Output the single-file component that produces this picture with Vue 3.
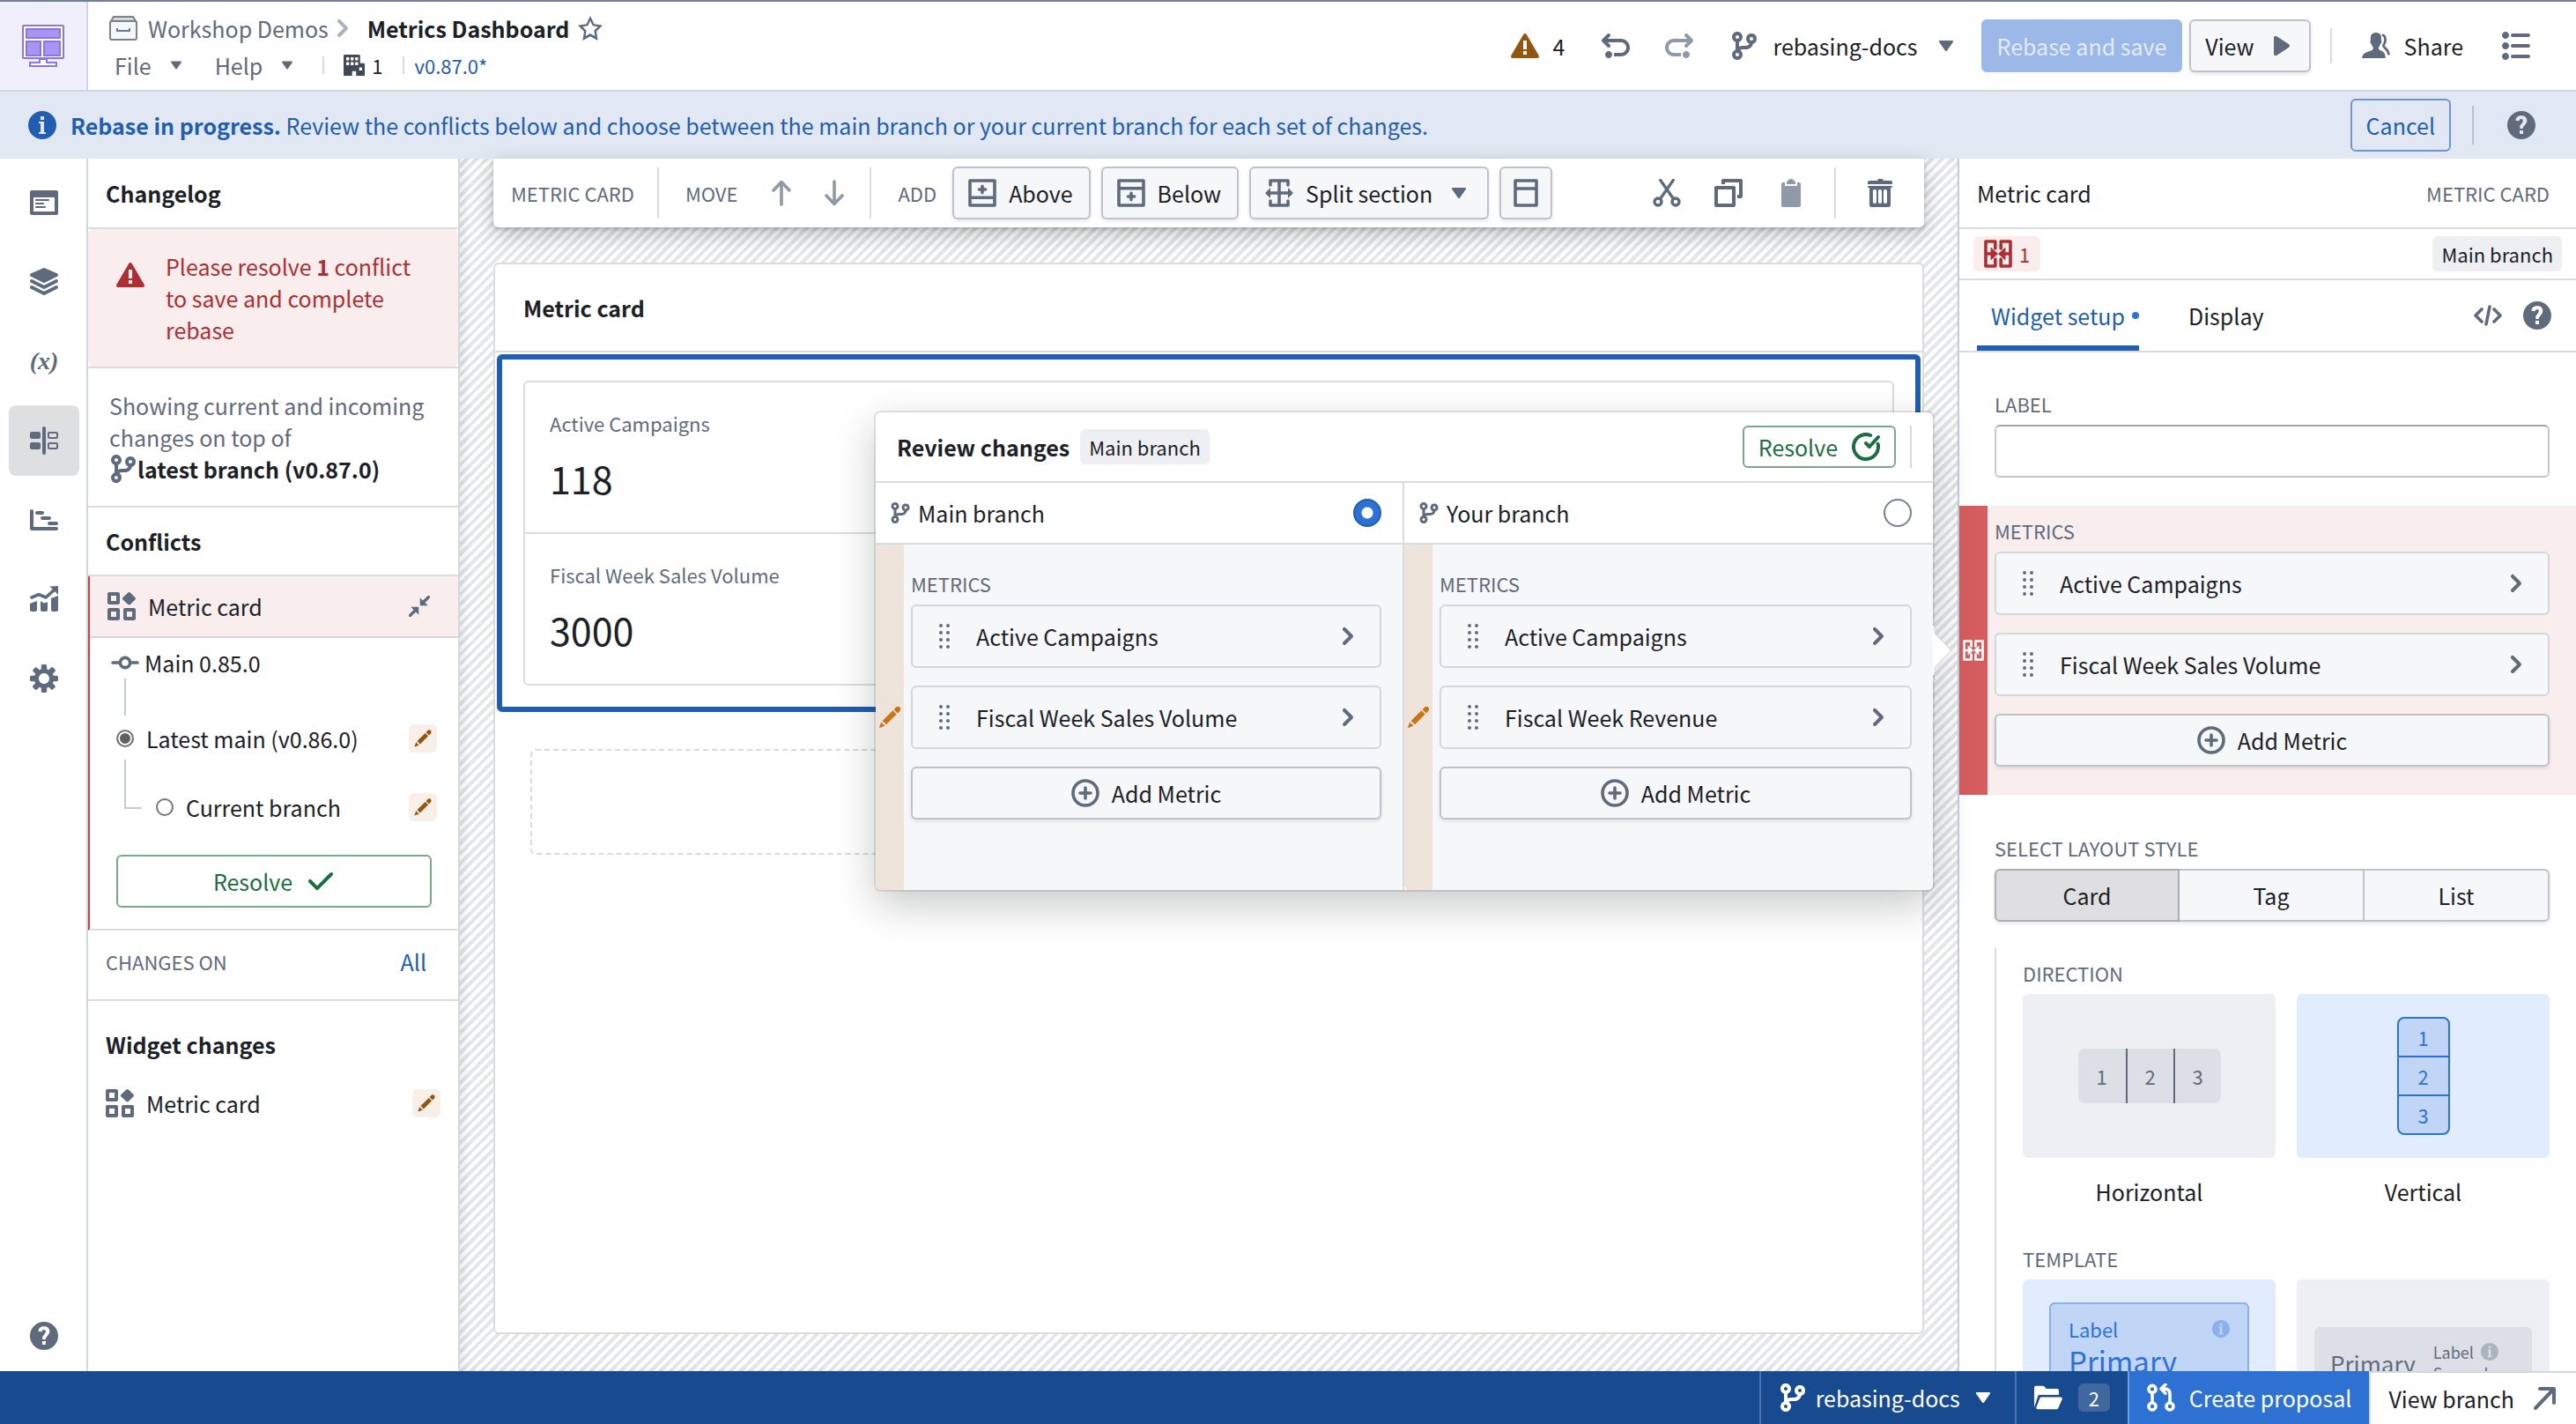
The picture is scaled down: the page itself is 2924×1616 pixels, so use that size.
<template>
  <div class="app">
    <header class="header">
      <a class="logo" href="#" aria-label="Workshop">
        <svg width="48" height="48" viewBox="0 0 48 48" fill="none">
          <rect x="1" y="1" width="46" height="37" rx="1" fill="#fff" stroke="#8b76dc" stroke-width="2" />
          <path d="M5 5h38v10H5zM5 19h16v16H5zM25 19h18v16H25z" fill="#a695f5" stroke="#8b76dc" stroke-width="2" />
          <path d="M20 39h8v4h11v4H9v-4h11z" fill="#fff" stroke="#8b76dc" stroke-width="2" />
        </svg>
      </a>

      <div class="header-info">
        <div class="crumbs">
          <svg width="32" height="28" viewBox="0 0 32 28" fill="none">
            <path d="M2 6 5 1h22l3 5z" fill="#d3d8de" stroke="#7d8187" stroke-width="2" />
            <rect x="1" y="6" width="30" height="21" rx="2" fill="#f6f7f9" stroke="#7d8187" stroke-width="2" />
            <path d="M9 14v3h14v-3" stroke="#5f7f99" stroke-width="2" />
          </svg>
          <a href="#" class="crumb">Workshop Demos</a>
          <Icon class="crumb-sep" name="chevronRight" :size="32" />
          <h1 class="crumb-current">Metrics Dashboard</h1>
          <button class="bare star" type="button" aria-label="Favorite"><Icon name="star" :size="28" /></button>
        </div>
        <div class="menus">
          <button class="bare menu" type="button">File <Icon name="caretDown" :size="24" /></button>
          <button class="bare menu" type="button">Help <Icon name="caretDown" :size="24" /></button>
          <div class="meta">
            <span class="vline short" />
            <span class="org"><Icon name="office" :size="24" />1</span>
            <span class="vline short" />
            <a class="version" href="#">v0.87.0*</a>
          </div>
        </div>
      </div>

      <div class="header-actions">
        <button class="bare warn" type="button"><Icon name="warning" :size="32" /><span>4</span></button>
        <button class="bare undo" type="button" aria-label="Undo"><Icon name="undo" :size="32" /></button>
        <button class="bare redo" type="button" aria-label="Redo"><Icon name="undo" :size="32" /></button>
        <button class="bare branch-menu" type="button">
          <Icon name="branch" :size="32" />rebasing-docs<Icon name="caretDown" :size="32" />
        </button>
        <button class="btn save" type="button" disabled>Rebase and save</button>
        <button class="btn view" type="button">View<Icon name="play" :size="32" /></button>
        <span class="vline header-line" />
        <button class="bare share" type="button"><Icon name="people" :size="32" />Share</button>
        <button class="bare list" type="button" aria-label="Properties"><Icon name="properties" :size="32" /></button>
      </div>
    </header>

    <div class="banner">
      <Icon name="info" :size="32" />
      <p>
        <strong>Rebase in progress.</strong> Review the conflicts below and choose between the main branch or your
        current branch for each set of changes.
      </p>
      <button class="btn-outline cancel" type="button">Cancel</button>
      <span class="vline banner-line" />
      <button class="bare" type="button" aria-label="Help"><Icon name="help" :size="32" /></button>
    </div>

    <div class="workspace">
      <nav class="rail">
        <button
          v-for="item in railItems"
          :key="item"
          class="rail-btn"
          :class="{ active: activeRail === item }"
          type="button"
          :aria-label="item"
          @click="activeRail = item"
        >
          <span v-if="item === 'variable'" class="variable">(x)</span>
          <Icon v-else :name="item" :size="32" />
        </button>
        <button class="rail-btn rail-help" type="button" aria-label="Help"><Icon name="help" :size="32" /></button>
      </nav>

      <aside class="changelog">
        <h2 class="panel-title">Changelog</h2>
        <div class="alert">
          <Icon name="warning" :size="32" />
          <p>Please resolve <strong>1</strong> conflict to save and complete rebase</p>
        </div>
        <p class="showing">
          Showing current and incoming changes on top of
          <span class="latest"><Icon name="branch" :size="32" /><strong>latest branch (v0.87.0)</strong></span>
        </p>
        <h2 class="panel-title conflicts-title">Conflicts</h2>
        <section class="conflict">
          <div class="conflict-head">
            <Icon name="widget" :size="32" />
            <span>Metric card</span>
            <button class="bare" type="button" aria-label="Collapse"><Icon name="minimize" :size="24" /></button>
          </div>
          <div class="tree">
            <div class="node root"><Icon name="commit" :size="32" />Main 0.85.0</div>
            <span class="stem" />
            <div class="node latest-node">
              <input id="tree-main" v-model="treeChoice" type="radio" name="tree" value="main" />
              <label for="tree-main">Latest main (v0.86.0)</label>
              <button class="pencil" type="button" aria-label="Edited"><Icon name="edit" :size="22" /></button>
            </div>
            <div class="node current-node">
              <span class="elbow" />
              <input id="tree-current" v-model="treeChoice" type="radio" name="tree" value="current" />
              <label for="tree-current">Current branch</label>
              <button class="pencil" type="button" aria-label="Edited"><Icon name="edit" :size="22" /></button>
            </div>
          </div>
          <button class="btn-outline resolve-wide" type="button">Resolve<Icon name="tick" :size="32" /></button>
        </section>
        <div class="changes-on">
          <span class="caps">Changes on</span>
          <a href="#">All</a>
        </div>
        <h2 class="panel-title widget-title">Widget changes</h2>
        <div class="widget-row">
          <Icon name="widget" :size="32" />
          <span>Metric card</span>
          <button class="pencil" type="button" aria-label="Edited"><Icon name="edit" :size="22" /></button>
        </div>
      </aside>

      <main class="canvas">
        <div class="toolbar">
          <span class="caps tool-name">Metric card</span>
          <span class="vline" />
          <span class="caps tool-move">Move</span>
          <button class="bare faded" type="button" aria-label="Move up"><Icon name="arrowUp" :size="32" /></button>
          <button class="bare faded down" type="button" aria-label="Move down"><Icon name="arrowUp" :size="32" /></button>
          <span class="vline tool-line" />
          <span class="caps tool-add">Add</span>
          <div class="tool-buttons">
            <button class="btn" type="button"><Icon name="rowAbove" :size="32" />Above</button>
            <button class="btn" type="button"><Icon name="rowBelow" :size="32" />Below</button>
            <button class="btn split" type="button">
              <Icon name="split" :size="32" />Split section<Icon name="caretDown" :size="32" />
            </button>
            <button class="btn" type="button" aria-label="Header"><Icon name="layout" :size="32" /></button>
          </div>
          <div class="tool-edit">
            <button class="bare" type="button" aria-label="Cut"><Icon name="cut" :size="32" /></button>
            <button class="bare" type="button" aria-label="Copy"><Icon name="duplicate" :size="32" /></button>
            <button class="bare faded" type="button" aria-label="Paste"><Icon name="clipboard" :size="32" /></button>
            <span class="vline" />
            <button class="bare" type="button" aria-label="Delete"><Icon name="trash" :size="32" /></button>
          </div>
        </div>

        <section class="page-card">
          <h2 class="page-title">Metric card</h2>
          <div class="selection">
            <div class="metric-list">
              <div v-for="metric in metricValues" :key="metric.label" class="metric">
                <span class="metric-label">{{ metric.label }}</span>
                <span class="metric-value">{{ metric.value }}</span>
              </div>
            </div>
          </div>
          <div class="dropzone" />
        </section>

        <div class="popover">
          <svg class="popover-arrow" width="22" height="56" viewBox="0 0 22 56">
            <path d="M0 0c0 6 2 9 6 13l13 13q2 2 0 4L6 43c-4 4-6 7-6 13z" fill="#fff" stroke="#d0d3d8" />
            <path d="M0 0v56" stroke="#fff" stroke-width="3" />
          </svg>
          <div class="popover-head">
            <h2>Review changes</h2>
            <span class="tag">Main branch</span>
            <button class="btn-outline resolve" type="button">Resolve<Icon name="confirm" :size="32" /></button>
            <span class="vline" />
          </div>
          <div class="compare">
            <div v-for="side in sides" :key="side.id" class="side">
              <div class="side-head">
                <Icon name="branch" :size="24" />
                <label :for="`side-${side.id}`">{{ side.name }}</label>
                <input :id="`side-${side.id}`" v-model="chosenSide" type="radio" name="side" :value="side.id" />
              </div>
              <div class="side-body">
                <div class="strip"><Icon name="edit" :size="28" /></div>
                <div class="side-metrics">
                  <span class="caps">Metrics</span>
                  <button v-for="metric in side.metrics" :key="metric" class="metric-item" type="button">
                    <Icon name="drag" :size="32" /><span>{{ metric }}</span><Icon name="chevronRight" :size="32" />
                  </button>
                  <button class="btn add-metric" type="button"><Icon name="addCircle" :size="32" />Add Metric</button>
                </div>
              </div>
            </div>
          </div>
        </div>
      </main>

      <aside class="inspector">
        <div class="inspector-head">
          <h2>Metric card</h2>
          <span class="caps">Metric card</span>
        </div>
        <div class="inspector-sub">
          <span class="conflict-tag"><Icon name="merge" :size="32" />1</span>
          <span class="tag">Main branch</span>
        </div>
        <div class="tabs">
          <button class="tab selected" type="button">Widget setup<span class="tab-dot" /></button>
          <button class="tab" type="button">Display</button>
          <button class="bare tab-code" type="button" aria-label="Code"><Icon name="code" :size="32" /></button>
          <button class="bare" type="button" aria-label="Help"><Icon name="help" :size="32" /></button>
        </div>

        <div class="field">
          <label class="caps" for="widget-label">Label</label>
          <input id="widget-label" v-model="widgetLabel" class="text-input" type="text" />
        </div>

        <div class="metrics-conflict">
          <div class="strip"><Icon name="merge" :size="24" /></div>
          <div class="side-metrics">
            <span class="caps">Metrics</span>
            <button v-for="metric in sides[0].metrics" :key="metric" class="metric-item" type="button">
              <Icon name="drag" :size="32" /><span>{{ metric }}</span><Icon name="chevronRight" :size="32" />
            </button>
            <button class="btn add-metric" type="button"><Icon name="addCircle" :size="32" />Add Metric</button>
          </div>
        </div>

        <div class="layout-style">
          <span class="caps">Select layout style</span>
          <div class="segmented">
            <button
              v-for="style in layoutStyles"
              :key="style"
              type="button"
              :class="{ on: layoutStyle === style }"
              @click="layoutStyle = style"
            >
              {{ style }}
            </button>
          </div>
        </div>

        <div class="options">
          <span class="caps">Direction</span>
          <div class="option-grid">
            <button class="option" type="button">
              <span class="thumb"><span class="cells across"><i>1</i><i>2</i><i>3</i></span></span>
              Horizontal
            </button>
            <button class="option" type="button">
              <span class="thumb on"><span class="cells stacked"><i>1</i><i>2</i><i>3</i></span></span>
              Vertical
            </button>
          </div>
          <span class="caps template-label">Template</span>
          <div class="option-grid">
            <button class="option" type="button">
              <span class="thumb on tall">
                <span class="sample-a">
                  <span class="sample-row">Label<Icon name="info" :size="20" /></span>
                  <span class="sample-big">Primary</span>
                </span>
              </span>
            </button>
            <button class="option" type="button">
              <span class="thumb tall">
                <span class="sample-b">
                  <span class="sample-mid">Primary</span>
                  <span class="sample-side">
                    <span class="sample-row">Label<Icon name="info" :size="20" /></span>
                    <span>Secondary</span>
                  </span>
                </span>
              </span>
            </button>
          </div>
        </div>
      </aside>
    </div>

    <footer class="footer">
      <button class="foot foot-branch" type="button">
        <Icon name="branch" :size="32" />rebasing-docs<Icon name="caretDown" :size="32" />
      </button>
      <button class="foot foot-folder" type="button"><Icon name="folder" :size="32" /><span class="count">2</span></button>
      <button class="foot foot-create" type="button"><Icon name="pull" :size="32" />Create proposal</button>
      <a class="foot foot-view" href="#">View branch<Icon name="arrowTopRight" :size="32" /></a>
    </footer>
  </div>
</template>

<script setup>
import { h, ref } from 'vue'

defineOptions({
  name: 'MetricsDashboardEditor',
})

// Each icon is [filled path, stroked path, stroke width] on a 16 unit grid.
const icons = {
  branch: [
    'M12 1c-1.66 0-3 1.34-3 3 0 1.25.76 2.32 1.85 2.77A2.02 2.02 0 019 8H7c-.73 0-1.41.21-2 .55V5.82C6.16 5.4 7 4.3 7 3c0-1.66-1.34-3-3-3S1 1.34 1 3c0 1.3.84 2.4 2 2.82v4.37c-1.16.4-2 1.51-2 2.81 0 1.66 1.34 3 3 3s3-1.34 3-3c0-1.04-.53-1.95-1.32-2.49.35-.31.81-.51 1.32-.51h2c1.92 0 3.52-1.35 3.91-3.15A2.996 2.996 0 0012 1zM4 2c.55 0 1 .45 1 1s-.45 1-1 1-1-.45-1-1 .45-1 1-1zm0 12c-.55 0-1-.45-1-1s.45-1 1-1 1 .45 1 1-.45 1-1 1zm8-9c-.55 0-1-.45-1-1s.45-1 1-1 1 .45 1 1-.45 1-1 1z',
  ],
  undo: [
    'M4 11c-1.1 0-2 .9-2 2s.9 2 2 2 2-.9 2-2-.9-2-2-2zm7-7H3.41L4.7 2.71c.19-.18.3-.43.3-.71a1.003 1.003 0 00-1.71-.71l-3 3C.11 4.47 0 4.72 0 5c0 .28.11.53.29.71l3 3c.18.18.43.29.71.29a1.003 1.003 0 00.71-1.71L3.41 6H11c1.66 0 3 1.34 3 3s-1.34 3-3 3H7v2h4c2.76 0 5-2.24 5-5s-2.24-5-5-5z',
  ],
  warning: [
    'M15.84 13.5l.01-.01-7-12-.01.01c-.17-.3-.48-.5-.85-.5s-.67.2-.85.5l-.01-.01-7 12 .01.01c-.09.15-.15.31-.15.5 0 .55.45 1 1 1h14c.55 0 1-.45 1-1 0-.19-.06-.35-.15-.5zm-6.85-.51h-2v-2h2v2zm0-3h-2v-5h2v5z',
  ],
  info: [
    'M8 0C3.58 0 0 3.58 0 8s3.58 8 8 8 8-3.58 8-8-3.58-8-8-8zM7 3h2v2H7V3zm3 10H6v-1h1V7H6V6h3v6h1v1z',
  ],
  help: [
    'M8 0C3.58 0 0 3.58 0 8s3.58 8 8 8 8-3.58 8-8-3.58-8-8-8zm1 13H7v-2h2v2zm1.93-6.52c-.14.32-.35.64-.62.97L9.25 8.83c-.12.15-.24.29-.28.42-.04.13-.09.3-.09.52V10H7.12V8.88s.05-.51.21-.71L8.4 6.73c.22-.26.35-.49.44-.68.09-.19.12-.38.12-.58 0-.3-.1-.55-.28-.75-.18-.19-.44-.28-.76-.28-.33 0-.59.1-.78.29-.19.19-.33.46-.4.81-.03.11-.1.15-.2.14l-1.7-.25c-.12-.01-.16-.08-.14-.19.12-.82.46-1.47 1.03-1.94.57-.48 1.32-.72 2.25-.72.47 0 .9.07 1.29.22s.72.34 1 .59c.28.25.49.55.65.89.15.35.22.72.22 1.12s-.07.75-.21 1.08z',
  ],
  caretDown: [
    'M12 5.5c0-.28-.22-.5-.5-.5h-7a.495.495 0 00-.42.83l3.5 5c.09.1.27.17.42.17s.33-.07.42-.17l3.5-5c.05-.09.08-.2.08-.33z',
  ],
  play: [
    'M13 8c0-.35-.19-.64-.46-.82l.01-.02-7-4.6-.01.02A.969.969 0 005 2.4c-.55 0-1 .45-1 1v9.2c0 .55.45 1 1 1 .21 0 .39-.08.54-.18l.01.02 7-4.6-.01-.02c.27-.18.46-.47.46-.82z',
  ],
  chevronRight: [
    'M10.71 7.29l-4-4a1.003 1.003 0 00-1.42 1.42L8.59 8 5.3 11.29c-.19.18-.3.43-.3.71a1.003 1.003 0 001.71.71l4-4c.18-.18.29-.43.29-.71 0-.28-.11-.53-.29-.71z',
  ],
  star: [
    'M16 6.11l-5.53-.84L8 0 5.53 5.27 0 6.11l4 4.1L3.06 16 8 13.27 12.94 16 12 10.21l4-4.1zM4.91 13.2l.59-3.62L3 7.02l3.45-.53L8 3.2l1.55 3.29 3.45.53-2.5 2.56.59 3.62L8 11.49 4.91 13.2z',
  ],
  office: [
    'M1 0h10.5c.55 0 1 .45 1 1v5.5H15c.55 0 1 .45 1 1V16H9.5v-3.5h-3V16H0V1c0-.55.45-1 1-1zM2 2v2.4h2.2V2zM5.4 2v2.4h2.2V2zM8.8 2v2.4H11V2zM2 5.6V8h2.2V5.6zM5.4 5.6V8h2.2V5.6zM8.8 5.6V8H11V5.6zM11.8 9.6V12H14V9.6z',
  ],
  people: [
    'M11.1 10.9c-.9-.35-1.6-.8-1.7-1.9.4-.4.9-1.1 1.1-2.1.5-.2.7-.7.7-1.3 0-.4-.1-.7-.3-.9.3-1.5.2-4.2-2.9-4.2C4.9.5 4.7 3.2 5 4.7c-.2.2-.3.5-.3.9 0 .6.2 1.1.7 1.3.2 1 .6 1.7 1.1 2.1 0 1.1-.8 1.6-1.7 1.9-2 .8-4.4 1-4.8 4.1h13.4c-.1-2.6-.9-3.5-2.3-4.1z',
    'M12 2c1.5.7 1.4 2.4 1.1 3.8-.2.9-.7 1.5-.9 2.2.3 1.3 2.6 1.7 3 4.6',
    1.4,
  ],
  properties: [
    'M2 6C.9 6 0 6.9 0 8s.9 2 2 2 2-.9 2-2-.9-2-2-2zm4-3h9c.55 0 1-.45 1-1s-.45-1-1-1H6c-.55 0-1 .45-1 1s.45 1 1 1zm-4 9c-1.1 0-2 .9-2 2s.9 2 2 2 2-.9 2-2-.9-2-2-2zm13 1H6c-.55 0-1 .45-1 1s.45 1 1 1h9c.55 0 1-.45 1-1s-.45-1-1-1zm0-6H6c-.55 0-1 .45-1 1s.45 1 1 1h9c.55 0 1-.45 1-1s-.45-1-1-1zM2 0C.9 0 0 .9 0 2s.9 2 2 2 2-.9 2-2-.9-2-2-2z',
  ],
  application: [
    'M3.5 7h7c.28 0 .5-.22.5-.5s-.22-.5-.5-.5h-7c-.28 0-.5.22-.5.5s.22.5.5.5zM15 1H1c-.55 0-1 .45-1 1v12c0 .55.45 1 1 1h14c.55 0 1-.45 1-1V2c0-.55-.45-1-1-1zm-1 12H2V5h12v8zM3.5 9h4c.28 0 .5-.22.5-.5S7.78 8 7.5 8h-4c-.28 0-.5.22-.5.5s.22.5.5.5zm0 2h5c.28 0 .5-.22.5-.5s-.22-.5-.5-.5h-5c-.28 0-.5.22-.5.5s.22.5.5.5z',
  ],
  layers: [
    'M.55 4.89l7 3.5c.14.07.29.11.45.11s.31-.04.45-.11l7-3.5a.998.998 0 00-.06-1.81L8.4.08a1.006 1.006 0 00-.79 0l-6.99 3a.992.992 0 00-.07 1.81zM15 10c-.16 0-.31.04-.45.11L8 13.38 1.45 10.1c-.14-.06-.29-.1-.45-.1-.55 0-1 .45-1 1 0 .39.23.73.55.89l7 3.5c.14.07.29.11.45.11s.31-.04.45-.11l7-3.5c.32-.16.55-.5.55-.89 0-.55-.45-1-1-1zm0-3.5c-.16 0-.31.04-.45.11L8 9.88 1.45 6.61A.997.997 0 001 6.5c-.55 0-1 .45-1 1 0 .39.23.73.55.89l7 3.5c.14.07.29.11.45.11s.31-.04.45-.11l7-3.5c.32-.16.55-.5.55-.89 0-.55-.45-1-1-1z',
  ],
  comparison: [
    'M1 3h4c.55 0 1 .45 1 1v2c0 .55-.45 1-1 1H1c-.55 0-1-.45-1-1V4c0-.55.45-1 1-1zm0 6h4c.55 0 1 .45 1 1v2c0 .55-.45 1-1 1H1c-.55 0-1-.45-1-1v-2c0-.55.45-1 1-1zM8 0c.55 0 1 .45 1 1v14c0 .55-.45 1-1 1s-1-.45-1-1V1c0-.55.45-1 1-1zm3 3h4c.55 0 1 .45 1 1v2c0 .55-.45 1-1 1h-4c-.55 0-1-.45-1-1V4c0-.55.45-1 1-1zm0 1v2h4V4zm0 5h4c.55 0 1 .45 1 1v2c0 .55-.45 1-1 1h-4c-.55 0-1-.45-1-1v-2c0-.55.45-1 1-1zm0 1v2h4v-2z',
  ],
  gantt: ['', 'M1 3v10h14M4 4h3M7 7h4M11 10h4', 2],
  chart: [
    'M0 10.5L4 9v5c0 .55-.45 1-1 1H1c-.55 0-1-.45-1-1zM6 9l2 1.2 2-.6V14c0 .55-.45 1-1 1H7c-.55 0-1-.45-1-1zm6-1.500L16 6v8c0 .55-.45 1-1 1h-2c-.55 0-1-.45-1-1zM16 .5v5L11.2.8z',
    'M1 7l4-1.7L9 7l5-4.5',
    1.8,
  ],
  settings: [
    'M15.19 6.39h-1.85c-.11-.37-.27-.71-.45-1.04l1.36-1.36c.31-.31.31-.82 0-1.13l-1.13-1.13a.803.803 0 00-1.13 0l-1.36 1.36c-.33-.17-.67-.33-1.04-.44V.79c0-.44-.36-.8-.8-.8h-1.6c-.44 0-.8.36-.8.8v1.86c-.39.12-.75.28-1.1.47l-1.3-1.3c-.3-.3-.79-.3-1.09 0L1.82 2.91c-.3.3-.3.79 0 1.09l1.3 1.3c-.2.34-.36.7-.48 1.09H.79c-.44 0-.8.36-.8.8v1.6c0 .44.36.8.8.8h1.85c.11.37.27.71.45 1.04l-1.36 1.36c-.31.31-.31.82 0 1.13l1.13 1.13c.31.31.82.31 1.13 0l1.36-1.36c.33.18.67.33 1.04.44v1.86c0 .44.36.8.8.8h1.6c.44 0 .8-.36.8-.8v-1.86c.39-.12.75-.28 1.1-.47l1.3 1.3c.3.3.79.3 1.09 0l1.09-1.09c.3-.3.3-.79 0-1.09l-1.3-1.3c.19-.35.36-.71.48-1.1h1.85c.44 0 .8-.36.8-.8v-1.6a.816.816 0 00-.81-.79zm-7.2 4.6c-1.66 0-3-1.34-3-3s1.34-3 3-3 3 1.34 3 3-1.34 3-3 3z',
  ],
  widget: [
    'M1 0h5c.55 0 1 .45 1 1v5c0 .55-.45 1-1 1H1c-.55 0-1-.45-1-1V1c0-.55.45-1 1-1zm1 2v3h3V2zM1 9h5c.55 0 1 .45 1 1v5c0 .55-.45 1-1 1H1c-.55 0-1-.45-1-1v-5c0-.55.45-1 1-1zm1 2v3h3v-3zm8-2h5c.55 0 1 .45 1 1v5c0 .55-.45 1-1 1h-5c-.55 0-1-.45-1-1v-5c0-.55.45-1 1-1zm1 2v3h3v-3zM8.6 3.1L11.7.2q.6-.4 1.2 0l2.9 2.9q.4.5 0 1L12.9 7q-.6.4-1.2 0L8.6 4.1q-.4-.5 0-1z',
  ],
  minimize: ['M1.5 8.5h6v6zM8.5 1.500v6h6z', 'M1 15l4-4M15 1l-4 4', 2.2],
  commit: ['', 'M1 8h3.5M11.5 8H15M8 5.2a2.8 2.8 0 100 5.600 2.8 2.8 0 000-5.600z', 1.8],
  edit: [
    'M3.25 10.26l2.47 2.47 6.69-6.69-2.46-2.48-6.7 6.7zM.99 14.99l3.86-1.39-2.46-2.44L.99 14.99zm12.25-14c-.48 0-.92.2-1.24.51l-1.44 1.44 2.47 2.47 1.44-1.44c.32-.32.51-.75.51-1.24.01-.95-.77-1.74-1.74-1.74z',
  ],
  tick: [
    'M14 3c-.28 0-.53.11-.71.29L6 10.59l-3.29-3.3a1.003 1.003 0 00-1.42 1.42l4 4c.18.18.43.29.71.29s.53-.11.71-.29l8-8A1.003 1.003 0 0014 3z',
  ],
  confirm: ['', 'M8 6l2 2 5-5.5M10.6 1.5A7 7 0 1014.8 6.4', 2],
  drag: [
    'M6 1a1 1 0 100 2 1 1 0 000-2zm4 0a1 1 0 100 2 1 1 0 000-2zM6 5a1 1 0 100 2 1 1 0 000-2zm4 0a1 1 0 100 2 1 1 0 000-2zM6 9a1 1 0 100 2 1 1 0 000-2zm4 0a1 1 0 100 2 1 1 0 000-2zm-4 4a1 1 0 100 2 1 1 0 000-2zm4 0a1 1 0 100 2 1 1 0 000-2z',
  ],
  addCircle: ['', 'M8 1a7 7 0 100 14A7 7 0 008 1zM5 8h6M8 5v6', 1.8],
  rowAbove: ['', 'M1 1h14v14H1zM1 10.6h14M8 4.2v3.6M6.2 6h3.6', 1.8],
  rowBelow: ['', 'M1 1h14v14H1zM1 5.4h14M8 8.200v3.600M6.2 10h3.6', 1.8],
  split: ['M0 8l3-3v6zM16 8l-3-3v6z', 'M3 3.500V1h10v2.500M3 12.500V15h10v-2.500M8 1v14M2 8h12', 1.8],
  layout: ['', 'M2 1h12v14H2zM2 5.500h12', 1.8],
  arrowUp: ['', 'M8 14.5V2M3.5 6.5L8 1.8l4.500 4.7', 1.8],
  cut: ['', 'M4.200 11.400L11.600.8M11.800 11.400L4.400.8M3 11a2 2 0 100 4 2 2 0 000-4zM13 11a2 2 0 100 4 2 2 0 000-4z', 1.7],
  duplicate: [
    'M15 0H5c-.55 0-1 .45-1 1v2h2V2h8v7h-1v2h2c.55 0 1-.45 1-1V1c0-.55-.45-1-1-1zm-4 4H1c-.55 0-1 .45-1 1v10c0 .55.45 1 1 1h10c.55 0 1-.45 1-1V5c0-.55-.45-1-1-1zm-1 10H2V6h8v8z',
  ],
  clipboard: [
    'M11 2c0-.55-.45-1-1-1h.22C9.88.4 9.24 0 8.5 0S7.12.4 6.78 1H7c-.55 0-1 .45-1 1v1h5V2zm2 0h-1v2H5V2H4c-.55 0-1 .45-1 1v12c0 .55.45 1 1 1h9c.55 0 1-.45 1-1V3c0-.55-.45-1-1-1z',
  ],
  trash: [
    'M14.49 3.99h-13c-.28 0-.5.22-.5.5s.22.5.5.5h.5v10c0 .55.45 1 1 1h10c.55 0 1-.45 1-1v-10h.5c.28 0 .5-.22.5-.5s-.22-.5-.5-.5zm-8.5 9c0 .55-.45 1-1 1s-1-.45-1-1v-6c0-.55.45-1 1-1s1 .45 1 1v6zm3 0c0 .55-.45 1-1 1s-1-.45-1-1v-6c0-.55.45-1 1-1s1 .45 1 1v6zm3 0c0 .55-.45 1-1 1s-1-.45-1-1v-6c0-.55.45-1 1-1s1 .45 1 1v6zm2-12h-4c0-.55-.45-1-1-1h-2c0 .55-.45 1-1 1h-4c-.55 0-1 .45-1 1v1h14v-1c0-.55-.45-1-1-1z',
  ],
  merge: [
    'M3.8 4.2L8 8l-4.2 3.8zM12.2 4.2L8 8l4.2 3.8z',
    'M6.4 5V1H1v14h5.4v-4M9.6 5V1H15v14H9.6v-4M1 8h5M15 8h-5',
    1.8,
  ],
  code: ['', 'M4.5 4.500L1 8l3.500 3.500M11.500 4.500L15 8l-3.500 3.500M9 3L7 13', 1.8],
  folder: [
    'M2.1 7.2c.15-.4.5-.7.9-.7h11V4c0-.55-.45-1-1-1H7L5.7 1.7c-.2-.2-.4-.3-.7-.3H1c-.55 0-1 .45-1 1v11.2zM15 7.800H4.1c-.4 0-.75.25-.9.6l-2 5.100c-.2.5.2 1.100.8 1.100h10.700c.4 0 .8-.25.95-.65l2.200-5c.2-.5-.2-1.150-.85-1.150z',
  ],
  pull: [
    '',
    'M3 1.2a2 2 0 100 4 2 2 0 000-4zM3 11a2 2 0 100 4 2 2 0 000-4zM13 11a2 2 0 100 4 2 2 0 000-4zM3 5.200V11M13 11V6c0-2-1-3-3-3H8M10.500.6L8 3l2.500 2.600',
    1.8,
  ],
  arrowTopRight: ['', 'M3 13.5L13 3M5.5 2.5h8v8', 2],
}

const Icon = ({ name, size }) => {
  const [fill, stroke, width] = icons[name]
  return h('svg', { class: 'icon', width: size, height: size, viewBox: '0 0 16 16', 'aria-hidden': 'true' }, [
    fill ? h('path', { d: fill, fill: 'currentColor', 'fill-rule': 'evenodd' }) : null,
    stroke
      ? h('path', {
          d: stroke,
          fill: 'none',
          stroke: 'currentColor',
          'stroke-width': width,
          'stroke-linecap': 'round',
          'stroke-linejoin': 'round',
        })
      : null,
  ])
}
Icon.props = ['name', 'size']

const railItems = ['application', 'layers', 'variable', 'comparison', 'gantt', 'chart', 'settings']
const activeRail = ref('comparison')
const treeChoice = ref('main')
const chosenSide = ref('main')
const widgetLabel = ref('')

const layoutStyles = ['Card', 'Tag', 'List']
const layoutStyle = ref('Card')

const metricValues = [
  { label: 'Active Campaigns', value: '118' },
  { label: 'Fiscal Week Sales Volume', value: '3000' },
]

const sides = [
  { id: 'main', name: 'Main branch', metrics: ['Active Campaigns', 'Fiscal Week Sales Volume'] },
  { id: 'yours', name: 'Your branch', metrics: ['Active Campaigns', 'Fiscal Week Revenue'] },
]
</script>

<style>
body {
  background: #fff;
  margin: 0;
}
</style>

<style scoped>
* {
  box-sizing: border-box;
  margin: 0;
  padding: 0;
}

.app {
  border-top: 2px solid #738091;
  color: #1c2127;
  display: flex;
  flex-direction: column;
  font-family: 'Noto Sans CJK SC', 'Noto Sans', sans-serif;
  font-size: 25px;
  height: 100vh;
  line-height: 36px;
  overflow: hidden;
}

button,
input {
  color: inherit;
  font: inherit;
}

a {
  color: #215db0;
  text-decoration: none;
}

h1,
h2 {
  font-size: 25px;
  font-weight: 700;
}

.icon {
  color: #5f6b7c;
  display: block;
  flex: none;
}

.caps {
  color: #5f6b7c;
  font-size: 22px;
  text-transform: uppercase;
  white-space: nowrap;
}

.vline {
  align-self: center;
  background: #d9dbde;
  flex: none;
  height: 58px;
  width: 2px;
}

.bare {
  align-items: center;
  background: none;
  border: none;
  cursor: pointer;
  display: flex;
  white-space: nowrap;
}

.btn {
  align-items: center;
  background: #f6f7f9;
  border: 2px solid #bfc2c8;
  border-radius: 6px;
  box-shadow: 0 2px 4px rgba(17, 20, 24, 0.1);
  cursor: pointer;
  display: flex;
  gap: 14px;
  height: 60px;
  justify-content: center;
  padding: 0 16px;
  white-space: nowrap;
}

.btn-outline {
  align-items: center;
  background: none;
  border: 2px solid #7ba88d;
  border-radius: 6px;
  color: #1c6e42;
  cursor: pointer;
  display: flex;
  gap: 16px;
  justify-content: center;
}

.btn-outline .icon {
  color: #1c6e42;
}

.tag {
  background: #edeff2;
  border-radius: 6px;
  font-size: 22px;
  height: 40px;
  line-height: 40px;
  padding: 0 10px;
  white-space: nowrap;
}

/* Header */
.header {
  align-items: stretch;
  border-bottom: 2px solid #d3d6da;
  display: flex;
  flex: none;
  height: 102px;
}

.logo {
  align-items: center;
  background: #f2effd;
  border-right: 2px solid #d5cffa;
  display: flex;
  justify-content: center;
  width: 100px;
}

.header-info {
  display: flex;
  flex-direction: column;
  gap: 6px;
  padding: 12px 0 0 24px;
}

.crumbs,
.menus {
  align-items: center;
  display: flex;
  height: 36px;
}

.crumb {
  color: #5f6b7c;
  margin-left: 12px;
}

.crumb-sep {
  color: #abb3bf;
}

.crumb-current {
  margin-left: 12px;
}

.star {
  margin-left: 10px;
}

.menus {
  gap: 32px;
  padding-left: 6px;
}

.menu {
  color: #5f6b7c;
  gap: 16px;
}

.meta {
  align-items: center;
  display: flex;
  margin-left: -4px;
}

.vline.short {
  height: 20px;
}

.org {
  align-items: center;
  display: flex;
  font-size: 22px;
  gap: 8px;
  margin: 0 22px;
}

.org .icon {
  color: #404854;
}

.version {
  font-size: 22px;
  margin-left: 12px;
}

.header-actions {
  align-items: center;
  display: flex;
  margin-left: auto;
  padding-right: 52px;
}

.warn {
  gap: 16px;
}

.warn .icon {
  color: #935610;
}

.undo {
  margin-left: 42px;
}

.redo {
  margin-left: 40px;
}

.redo .icon {
  color: #8f99a8;
  transform: scaleX(-1);
}

.branch-menu {
  gap: 16px;
  margin-left: 42px;
}

.save {
  background: #9bb8e8;
  border-color: #9bb8e8;
  box-shadow: none;
  color: #e4ecf9;
  margin-left: 24px;
}

.view {
  margin-left: 8px;
}

.header-line {
  height: 40px;
  margin-left: 22px;
}

.share {
  gap: 16px;
  margin-left: 34px;
}

.list {
  margin-left: 44px;
}

/* Banner */
.banner {
  align-items: center;
  background: #e1e8f4;
  color: #215db0;
  display: flex;
  flex: none;
  height: 76px;
  padding: 0 46px 0 32px;
}

.banner > .icon {
  color: #215db0;
}

.banner p {
  flex: 1;
  margin-left: 16px;
}

.cancel {
  border-color: #7096cf;
  color: #215db0;
  height: 60px;
  padding: 0 16px;
}

.banner-line {
  background: #b9c3d4;
  height: 44px;
  margin: 0 38px 0 24px;
}

/* Workspace */
.workspace {
  display: flex;
  flex: 1;
  min-height: 0;
}

.rail {
  align-items: center;
  border-right: 2px solid #d3d8de;
  display: flex;
  flex: none;
  flex-direction: column;
  gap: 10px;
  padding: 10px 0 0 2px;
  width: 100px;
}

.rail-btn {
  align-items: center;
  background: none;
  border: none;
  border-radius: 8px;
  cursor: pointer;
  display: flex;
  height: 80px;
  justify-content: center;
  width: 80px;
}

.rail-btn.active {
  background: #dddfe1;
}

.rail-help {
  margin-top: auto;
}

.variable {
  color: #5f6b7c;
  font-family: 'Liberation Serif', serif;
  font-size: 28px;
  font-style: italic;
  font-weight: 700;
}

.changelog {
  flex: none;
  width: 420px;
}

.panel-title {
  border-bottom: 2px solid #dcdcdd;
  line-height: 78px;
  padding-left: 20px;
}

.alert {
  align-items: flex-start;
  background: #f9eded;
  border-radius: 6px;
  color: #ac2f33;
  display: flex;
  gap: 24px;
  padding: 24px 32px;
}

.alert .icon {
  color: #ac2f33;
  margin-top: 12px;
}

.showing {
  border-bottom: 2px solid #dcdcdd;
  border-top: 2px solid #dcdcdd;
  color: #5f6b7c;
  padding: 24px 20px 24px 24px;
}

.latest {
  align-items: center;
  color: #1c2127;
  display: flex;
  white-space: nowrap;
}

.conflicts-title {
  line-height: 76px;
}

.conflict {
  border-bottom: 2px solid #dcdcdd;
  border-left: 2px solid #cd4246;
  padding-bottom: 24px;
}

.conflict-head {
  align-items: center;
  background: #f9eded;
  border-bottom: 2px solid #d9d6d8;
  display: flex;
  gap: 14px;
  height: 70px;
  padding: 0 32px 0 20px;
}

.conflict-head .bare {
  margin-left: auto;
}

.tree {
  padding: 10px 24px 0;
}

.node {
  align-items: center;
  display: flex;
  height: 36px;
}

.root {
  gap: 6px;
}

.stem {
  background: #c5cbd3;
  display: block;
  height: 42px;
  margin: 0 0 2px 15px;
  width: 2px;
}

.latest-node {
  height: 48px;
  padding-left: 6px;
}

.latest-node label {
  margin-left: 14px;
}

.current-node {
  align-items: flex-end;
  height: 72px;
  padding-left: 15px;
}

.current-node label {
  margin-left: 14px;
}

.elbow {
  align-self: flex-start;
  border-bottom: 2px solid #c5cbd3;
  border-left: 2px solid #c5cbd3;
  height: 56px;
  margin-right: 16px;
  width: 20px;
}

.current-node input {
  margin-bottom: 8px;
}

.current-node .pencil {
  margin-bottom: 2px;
}

.node input {
  appearance: none;
  background: #fff;
  border: 2px solid #767676;
  border-radius: 50%;
  height: 20px;
  width: 20px;
}

.node input:checked {
  background: #5f5f5f;
  box-shadow: inset 0 0 0 2px #fff;
}

.pencil {
  align-items: center;
  background: #f8f0e8;
  border: none;
  border-radius: 6px;
  cursor: pointer;
  display: flex;
  height: 32px;
  justify-content: center;
  margin-left: auto;
  width: 32px;
}

.pencil .icon {
  color: #935610;
}

.resolve-wide {
  height: 60px;
  margin: 36px 30px 0;
  width: calc(100% - 60px);
}

.changes-on {
  align-items: center;
  border-bottom: 2px solid #dcdcdd;
  display: flex;
  height: 80px;
  justify-content: space-between;
  padding: 0 36px 8px 20px;
}

.widget-title {
  border: none;
  line-height: 98px;
}

.widget-row {
  align-items: center;
  display: flex;
  gap: 14px;
  padding: 0 20px;
}

/* Canvas */
.canvas {
  background: repeating-linear-gradient(135deg, #fff 0, #fff 4px, #e4e6e9 4px, #e4e6e9 8px);
  border-left: 2px solid #d3d8de;
  border-right: 2px solid #c5cbd3;
  box-shadow: inset 6px 0 8px rgba(17, 20, 24, 0.08);
  display: flex;
  flex: 1;
  flex-direction: column;
  min-width: 0;
  padding: 0 38px 42px;
  position: relative;
}

.toolbar {
  align-items: center;
  background: #fff;
  border-radius: 0 0 6px 6px;
  box-shadow: 0 2px 4px rgba(17, 20, 24, 0.2), 0 8px 24px rgba(17, 20, 24, 0.24);
  display: flex;
  height: 78px;
  padding: 0 34px 0 20px;
}

.tool-name {
  margin-right: 26px;
}

.tool-move {
  margin: 0 34px 0 30px;
}

.faded .icon {
  color: #8f99a8;
}

.down {
  margin-left: 28px;
}

.down .icon {
  transform: rotate(180deg);
}

.tool-line {
  margin: 0 30px 0 24px;
}

.tool-add {
  margin-right: 18px;
}

.tool-buttons {
  display: flex;
  gap: 12px;
}

.tool-buttons .btn {
  padding: 0 18px 0 16px;
}

.tool-buttons .split {
  padding: 0 16px;
}

.tool-buttons .btn:last-child {
  padding: 0 12px;
}

.tool-edit {
  align-items: center;
  display: flex;
  gap: 38px;
  margin-left: auto;
}

.tool-edit .vline {
  margin: 0 -4px;
}

.page-card {
  background: #fff;
  border: 2px solid #dcdcdd;
  border-radius: 6px;
  flex: 1;
  margin-top: 40px;
}

.page-title {
  border-bottom: 2px solid #dcdcdd;
  line-height: 98px;
  padding-left: 32px;
}

.selection {
  border: 6px solid #215db0;
  border-radius: 6px;
  margin: 2px 2px 0;
  padding: 24px;
}

.metric-list {
  border: 2px solid #dcdcdd;
  border-radius: 6px;
}

.metric {
  display: flex;
  flex-direction: column;
  gap: 18px;
  height: 170px;
  padding: 30px 28px;
}

.metric + .metric {
  border-top: 2px solid #dcdcdd;
  height: 172px;
}

.metric-label {
  color: #5f6b7c;
  font-size: 22px;
  line-height: 32px;
}

.metric-value {
  font-size: 43px;
  line-height: 56px;
}

.dropzone {
  border: 2px dashed #d8dadd;
  border-radius: 6px;
  height: 120px;
  margin: 42px 40px 0;
}

/* Popover */
.popover {
  background: #fff;
  border-radius: 6px;
  box-shadow: 0 0 0 2px rgba(17, 20, 24, 0.1), 0 16px 48px rgba(17, 20, 24, 0.24);
  left: 472px;
  position: absolute;
  right: 28px;
  top: 288px;
}

.popover-arrow {
  left: 100%;
  position: absolute;
  top: 242px;
}

.popover-head {
  align-items: center;
  border-bottom: 2px solid #dcdcdd;
  display: flex;
  height: 80px;
  padding: 0 24px;
}

.popover-head .tag {
  margin-left: 12px;
}

.resolve {
  height: 48px;
  margin-left: auto;
  padding: 0 16px;
}

.popover-head .vline {
  height: 48px;
  margin-left: 16px;
}

.compare {
  display: grid;
  grid-template-columns: 1fr 1fr;
}

.side:first-child {
  border-right: 2px solid #dcdcdd;
}

.side-head {
  align-items: center;
  border-bottom: 2px solid #dcdcdd;
  display: flex;
  gap: 8px;
  height: 70px;
  padding: 0 24px 0 16px;
}

.side-head input {
  appearance: none;
  background: #fff;
  border: 2px solid #738091;
  border-radius: 50%;
  height: 32px;
  margin-left: auto;
  width: 32px;
}

.side-head input:checked {
  background: radial-gradient(circle, #fff 0, #fff 6px, #2d72d2 7px);
  border-color: #215db0;
}

.side-body,
.metrics-conflict {
  background: #f6f7f9;
  display: flex;
}

.side-body {
  border-radius: 0 0 6px 6px;
  overflow: hidden;
}

.strip {
  align-items: center;
  background: #eee4db;
  display: flex;
  flex: none;
  justify-content: center;
  width: 32px;
}

.side-body .strip .icon {
  color: #c87619;
}

.side-metrics {
  display: flex;
  flex: 1;
  flex-direction: column;
  gap: 20px;
  padding: 26px 24px 80px 8px;
}

.side-metrics .caps {
  margin-bottom: -14px;
}

.metric-item {
  align-items: center;
  background: #f6f7f9;
  border: 2px solid #d3d6da;
  border-radius: 6px;
  cursor: pointer;
  display: flex;
  gap: 20px;
  height: 72px;
  padding: 0 20px;
  white-space: nowrap;
}

.metric-item .icon:last-child {
  margin-left: auto;
}

/* Inspector */
.inspector {
  background: #fff;
  flex: none;
  overflow: hidden;
  width: 700px;
}

.inspector-head {
  align-items: center;
  border-bottom: 2px solid #dcdcdd;
  display: flex;
  height: 80px;
  justify-content: space-between;
  padding: 0 30px 0 20px;
}

.inspector-head h2 {
  font-weight: 400;
}

.inspector-sub {
  align-items: center;
  border-bottom: 2px solid #dcdcdd;
  display: flex;
  height: 58px;
  justify-content: space-between;
  padding: 0 16px;
}

.conflict-tag {
  align-items: center;
  background: #f9eded;
  border-radius: 6px;
  color: #ac2f33;
  display: flex;
  font-size: 22px;
  gap: 8px;
  height: 40px;
  padding: 0 12px;
}

.conflict-tag .icon {
  color: #ac2f33;
}

.tabs {
  align-items: center;
  border-bottom: 2px solid #dcdcdd;
  display: flex;
  height: 82px;
  padding: 0 28px 0 20px;
}

.tab {
  align-items: center;
  align-self: stretch;
  background: none;
  border: none;
  border-bottom: 6px solid transparent;
  cursor: pointer;
  display: flex;
  gap: 8px;
  margin-right: 40px;
  padding: 6px 0 0 16px;
}

.tab.selected {
  border-color: #215db0;
  color: #215db0;
}

.tab-dot {
  background: #2d72d2;
  border-radius: 50%;
  height: 8px;
  width: 8px;
}

.tab-code {
  margin: 0 24px 0 auto;
}

.field {
  display: flex;
  flex-direction: column;
  gap: 6px;
  padding: 40px 30px 32px 40px;
}

.text-input {
  background: #fff;
  border: 2px solid #c5c8cc;
  border-radius: 6px;
  border-top-color: #a0a4aa;
  height: 60px;
  padding: 0 20px;
}

.metrics-conflict {
  background: #f9eded;
}

.metrics-conflict .strip {
  background: #d55c5f;
}

.metrics-conflict .strip .icon {
  color: #fff;
}

.metrics-conflict .side-metrics {
  padding: 10px 30px 32px 8px;
}

.layout-style {
  display: flex;
  flex-direction: column;
  gap: 6px;
  padding: 42px 30px 30px 40px;
}

.segmented {
  border-radius: 6px;
  box-shadow: 0 2px 4px rgba(17, 20, 24, 0.1);
  display: grid;
  grid-template-columns: repeat(3, 1fr);
}

.segmented button {
  background: #f6f7f9;
  border: 2px solid #bfc2c8;
  cursor: pointer;
  height: 60px;
}

.segmented button:first-child {
  border-radius: 6px 0 0 6px;
}

.segmented button:last-child {
  border-radius: 0 6px 6px 0;
}

.segmented button + button {
  border-left: none;
}

.segmented button.on {
  background: #dfdfe1;
  border-color: #abaeb5;
}

.options {
  border-left: 2px solid #dcdcdd;
  display: flex;
  flex-direction: column;
  margin: 0 30px 0 40px;
  padding: 10px 0 0 30px;
}

.option-grid {
  display: grid;
  gap: 24px;
  grid-template-columns: 1fr 1fr;
  margin-top: 6px;
}

.option {
  align-items: center;
  background: none;
  border: none;
  cursor: pointer;
  display: flex;
  flex-direction: column;
  gap: 20px;
}

.thumb {
  align-items: center;
  background: #edeff3;
  border-radius: 6px;
  display: flex;
  height: 186px;
  justify-content: center;
  width: 100%;
}

.thumb.on {
  background: #e1edfe;
}

.thumb.tall {
  align-items: flex-start;
}

.template-label {
  margin-top: 40px;
}

.cells {
  background: #dcdfe6;
  border-radius: 8px;
  color: #5f6b7c;
  display: flex;
  font-size: 22px;
}

.cells i {
  font-style: normal;
  text-align: center;
}

.across i {
  line-height: 62px;
  width: 54px;
}

.across i + i {
  border-left: 2px solid #5f6b7c;
}

.stacked {
  background: #c1d6f7;
  border: 2px solid #2d72d2;
  color: #2d72d2;
  flex-direction: column;
  width: 60px;
}

.stacked i {
  line-height: 42px;
}

.stacked i + i {
  border-top: 2px solid #2d72d2;
}

.sample-a {
  background: #c1d6f7;
  border: 2px solid #8bb0ea;
  border-radius: 6px;
  color: #2d72d2;
  display: flex;
  flex-direction: column;
  height: 140px;
  margin: 26px 30px 0;
  padding: 10px 20px;
  text-align: left;
  width: 100%;
}

.sample-row {
  align-items: center;
  display: flex;
  font-size: 22px;
  justify-content: space-between;
  line-height: 36px;
}

.sample-a .icon {
  color: #8bb0ea;
}

.sample-big {
  font-size: 33px;
  line-height: 36px;
}

.sample-b {
  background: #dcdfe6;
  border-radius: 6px;
  color: #5f6b7c;
  display: flex;
  gap: 20px;
  height: 100px;
  margin: 54px 20px 0;
  padding: 16px 18px 0;
  width: 100%;
}

.sample-mid {
  font-size: 26px;
  line-height: 50px;
}

.sample-side {
  font-size: 18px;
  line-height: 24px;
  text-align: left;
}

.sample-side .sample-row {
  font-size: 18px;
  gap: 8px;
  justify-content: flex-start;
  line-height: 24px;
}

.sample-b .icon {
  color: #abb3bf;
}

/* Footer */
.footer {
  background: #184a90;
  color: #fff;
  display: flex;
  flex: none;
  height: 60px;
  justify-content: flex-end;
}

.foot {
  align-items: center;
  background: none;
  border: none;
  border-left: 2px solid #4a74ad;
  color: #fff;
  cursor: pointer;
  display: flex;
  padding: 0 20px;
  white-space: nowrap;
}

.foot .icon {
  color: #fff;
}

.foot-branch {
  gap: 10px;
}

.foot-folder {
  gap: 18px;
}

.count {
  background: #41679f;
  border-radius: 6px;
  font-size: 22px;
  line-height: 32px;
  width: 36px;
}

.foot-create {
  background: #2d72d2;
  border-color: #6c9fe6;
  gap: 16px;
}

.foot-view {
  background: #fff;
  border-color: #d3d8de;
  border-top: 2px solid #d3d8de;
  color: #1c2127;
  gap: 18px;
}

.foot-view .icon {
  color: #5f6b7c;
}
</style>
